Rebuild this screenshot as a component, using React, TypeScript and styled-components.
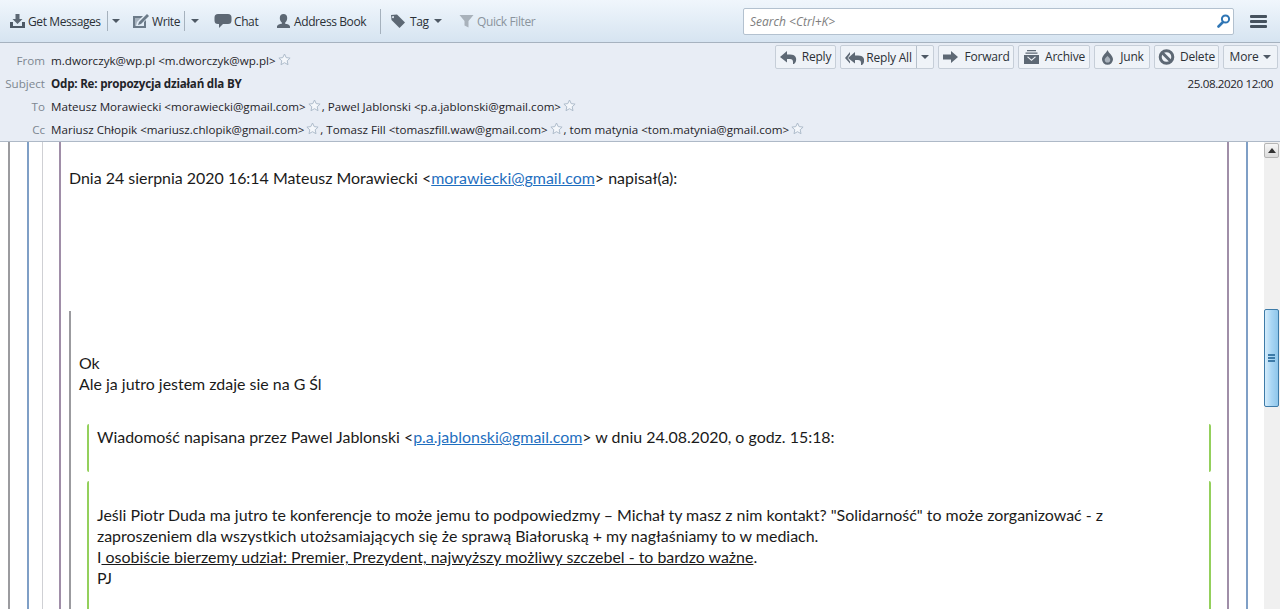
import * as React from 'react';
import styled, { createGlobalStyle } from 'styled-components';

const Global = createGlobalStyle`
  html, body { margin: 0; padding: 0; height: 100%; overflow: hidden; background: #fff; }
  body { font-family: "Open Sans", "Liberation Sans", sans-serif; color: #222; }
`;

const Icon = ({ w = 16, h = 16, children }: { w?: number; h?: number; children: React.ReactNode }) => (
  <svg width={w} height={h} viewBox={`0 0 ${w} ${h}`} fill="#5d6874" style={{ flex: 'none', display: 'block' }}>{children}</svg>
);

const Star = () => (
  <StarBox width="13" height="13" viewBox="0 0 13 13">
    <path d="M6.5 1l1.7 3.6 3.9.5-2.9 2.7.8 3.9-3.5-2-3.5 2 .8-3.9L.9 5.1l3.9-.5z" fill="#f4f7fb" stroke="#aebccb" strokeWidth="1" />
  </StarBox>
);

const ReplyArrow = ({ x = 0 }: { x?: number }) => (
  <path transform={`translate(${x} 0)`} d="M7 2L0 8l7 5.500V10h3c2 0 3 1 3 3v2h1c2-1.500 2.500-4 2-6-.5-2.500-3-3.500-6-3.500H7z" />
);

const GetMessagesIcon = () => (
  <Icon w={17} h={16}>
    <path d="M6.5 1h4v5h3l-5 5-5-5h3z" />
    <path d="M1 9h3v4h9V9h3v6H1z" fill="#4d5966" />
  </Icon>
);
const WriteIcon = () => (
  <Icon w={18} h={16}>
    <path d="M1 3h10l-2 2H3v8h9V9l2-2v8H1z" fill="#6b7a88" />
    <path d="M15 1l2 2-8 8-3 1 1-3z" fill="#6b7a88" />
    <path d="M3 5h6L5 9l-1 4H3z" fill="#a5b1bd" />
  </Icon>
);
const ChatIcon = () => (
  <Icon w={18} h={16}>
    <path d="M4 1h10a3.500 3.500 0 0 1 3.500 3.500v3A3.500 3.500 0 0 1 14 11H9l-4 4v-4H4A3.500 3.500 0 0 1 .5 7.500v-3A3.500 3.500 0 0 1 4 1z" />
  </Icon>
);
const PersonIcon = () => (
  <Icon w={16} h={16}>
    <path d="M7.500 1c2.300 0 3.700 1.600 3.700 4 0 2-.9 3.800-2 4.500v1.200c1.800.4 4.800 1 4.800 2.800V15H1v-1.500c0-1.800 3-2.400 4.800-2.800V9.500c-1.100-.7-2-2.500-2-4.500 0-2.400 1.400-4 3.700-4z" />
  </Icon>
);
const TagIcon = () => (
  <Icon w={18} h={16}>
    <path d="M1 2l6-.5 8 8-5.500 5.500-8-8zM4 4a1 1 0 1 0 0 .1z" fillRule="evenodd" />
  </Icon>
);
const FilterIcon = () => (
  <Icon w={16} h={16}>
    <path d="M.5 2h14L9.500 8v6.500l-4-2V8z" fill="#a9b2bb" />
  </Icon>
);
const ForwardIcon = () => (
  <Icon w={17} h={16}>
    <path d="M9 2l7 6-7 6v-3.500H1v-5h8z" />
  </Icon>
);
const ArchiveIcon = () => (
  <Icon w={17} h={16}>
    <path d="M4 1h9v1.200H4zM2.500 3.500h12v1.200h-12z" />
    <path d="M1 6h15v9H1zm3 2l4.500 4L13 8l-1-.5-3.500 3-3.500-3z" fillRule="evenodd" />
  </Icon>
);
const JunkIcon = () => (
  <Icon w={15} h={16}>
    <path d="M7.500 1C8.500 4 13 6.500 13 10.300a5.500 5.500 0 0 1-11 0C2 6.500 6.500 4 7.500 1z" />
    <path d="M7.500 7c.8 1.200 2.800 2.200 2.800 3.800a2.800 2.800 0 0 1-5.600 0C4.700 9.200 6.700 8.200 7.500 7z" fill="#aab3bd" />
  </Icon>
);
const DeleteIcon = () => (
  <Icon w={17} h={16}>
    <circle cx="8.500" cy="8" r="6.300" fill="none" stroke="#5d6874" strokeWidth="3" />
    <path d="M4.500 4l8 8" stroke="#5d6874" strokeWidth="3" />
  </Icon>
);

export default function App() {
  return (
    <Page>
      <Global />
      <Toolbar>
        <ToolItem $w={92}><GetMessagesIcon /><span>Get Messages</span></ToolItem>
        <Sep $h={20} $ml={6} />
        <Caret $ml={4} $mr={12} />
        <ToolItem $w={48}><WriteIcon /><span>Write</span></ToolItem>
        <Sep $h={20} $ml={4} />
        <Caret $ml={6} $mr={15} />
        <ToolItem $w={45}><ChatIcon /><span>Chat</span></ToolItem>
        <ToolItem $w={90} $ml={17}><PersonIcon /><span>Address Book</span></ToolItem>
        <Sep $h={25} $ml={14} />
        <ToolItem $w={39} $ml={9}><TagIcon /><span>Tag</span></ToolItem>
        <Caret $ml={5} $mr={17} />
        <ToolItem $w={78} $muted><FilterIcon /><span>Quick Filter</span></ToolItem>
        <Search>
          <SearchHint>Search &lt;Ctrl+K&gt;</SearchHint>
          <svg width="14" height="14" viewBox="0 0 14 14">
            <circle cx="8.500" cy="5" r="3.600" fill="none" stroke="#2f76b5" strokeWidth="2" />
            <path d="M6 8L1.500 12.500" stroke="#2f76b5" strokeWidth="2.600" strokeLinecap="round" />
          </svg>
        </Search>
        <Burger><i /><i /><i /></Burger>
      </Toolbar>

      <Header>
        <FromRow>
          <Label>From</Label>
          <Value>m.dworczyk@wp.pl &lt;m.dworczyk@wp.pl&gt;<Star /></Value>
          <Actions>
            <ActionButton $w={61}><Icon w={17} h={16}><ReplyArrow /></Icon>Reply</ActionButton>
            <SplitButton>
              <ActionButton as="div" $w={75} $flat $gap={2}>
                <Icon w={19} h={16}>
                  <path d="M5 2L0 8l5 5.500v-2L2.500 8 5 4.500z" />
                  <ReplyArrow x={3} />
                </Icon>
                Reply All
              </ActionButton>
              <SplitCaret><Caret /></SplitCaret>
            </SplitButton>
            <ActionButton $w={76}><ForwardIcon />Forward</ActionButton>
            <ActionButton $w={72}><ArchiveIcon />Archive</ActionButton>
            <ActionButton $w={56}><JunkIcon />Junk</ActionButton>
            <ActionButton $w={65}><DeleteIcon />Delete</ActionButton>
            <ActionButton $w={55}>More<Caret /></ActionButton>
          </Actions>
        </FromRow>
        <Row>
          <Label>Subject</Label>
          <Value $bold>Odp: Re: propozycja działań dla BY</Value>
          <DateText>25.08.2020 12:00</DateText>
        </Row>
        <Row>
          <Label>To</Label>
          <Value>
            Mateusz Morawiecki &lt;morawiecki@gmail.com&gt;<Star />, Pawel Jablonski &lt;p.a.jablonski@gmail.com&gt;<Star />
          </Value>
        </Row>
        <Row>
          <Label>Cc</Label>
          <Value>
            Mariusz Chłopik &lt;mariusz.chlopik@gmail.com&gt;<Star />, Tomasz Fill &lt;tomaszfill.waw@gmail.com&gt;<Star />, tom matynia &lt;tom.matynia@gmail.com&gt;<Star />
          </Value>
        </Row>
      </Header>

      <Main>
        <Message>
          <OuterQuote>
            <BlueQuote>
              <PaleQuote>
                <PurpleQuote>
                  <Intro>
                    Dnia 24 sierpnia 2020 16:14 Mateusz Morawiecki &lt;<Link>morawiecki@gmail.com</Link>&gt; napisał(a):
                  </Intro>
                  <InnerQuote>
                    <Reply>Ok<br />Ale ja jutro jestem zdaje sie na G Śl</Reply>
                    <GreenNote>
                      Wiadomość napisana przez Pawel Jablonski &lt;<Link>p.a.jablonski@gmail.com</Link>&gt; w dniu 24.08.2020, o godz. 15:18:
                    </GreenNote>
                    <GreenBody>
                      Jeśli Piotr Duda ma jutro te konferencje to może jemu to podpowiedzmy – Michał ty masz z nim kontakt? "Solidarność" to może zorganizować - z<br />
                      zaproszeniem dla wszystkich utożsamiających się że sprawą Białoruską + my nagłaśniamy to w mediach.<br />
                      I<Underlined> osobiście bierzemy udział: Premier, Prezydent, najwyższy możliwy szczebel - to bardzo ważne</Underlined>.<br />
                      PJ
                    </GreenBody>
                  </InnerQuote>
                </PurpleQuote>
              </PaleQuote>
            </BlueQuote>
          </OuterQuote>
        </Message>
        <Scrollbar>
          <ScrollUp>
            <svg width="8" height="5" viewBox="0 0 8 5"><path d="M4 0l4 5H0z" fill="#333" /></svg>
          </ScrollUp>
          <ScrollThumb><Grip><i /><i /><i /></Grip></ScrollThumb>
        </Scrollbar>
      </Main>
    </Page>
  );
}

const Page = styled.div`
  width: 1280px;
  height: 609px;
  display: flex;
  flex-direction: column;
  overflow: hidden;
`;

const Toolbar = styled.div`
  height: 42px;
  flex: none;
  box-sizing: content-box;
  display: flex;
  align-items: center;
  padding-left: 9px;
  background: linear-gradient(#f0f6fc, #d6e4f1);
  border-bottom: 1px solid #a6b2bf;
  font-size: 12px;
  letter-spacing: -0.4px;
`;

const ToolItem = styled.div<{ $w: number; $ml?: number; $muted?: boolean }>`
  width: ${({ $w }) => $w}px;
  margin-left: ${({ $ml }) => $ml || 0}px;
  display: flex;
  align-items: center;
  gap: 2px;
  white-space: nowrap;
  color: ${({ $muted }) => ($muted ? '#8b949d' : '#2b3036')};
  flex: none;
`;

const Sep = styled.div<{ $h: number; $ml: number }>`
  width: 1px;
  height: ${({ $h }) => $h}px;
  margin-left: ${({ $ml }) => $ml}px;
  background: #a5b1bd;
  flex: none;
`;

const Caret = styled.span<{ $ml?: number; $mr?: number }>`
  width: 0;
  height: 0;
  flex: none;
  margin-left: ${({ $ml }) => $ml || 0}px;
  margin-right: ${({ $mr }) => $mr || 0}px;
  border-left: 4px solid transparent;
  border-right: 4px solid transparent;
  border-top: 4px solid #4e5965;
`;

const Search = styled.div`
  width: 491px;
  height: 27px;
  box-sizing: border-box;
  margin-left: auto;
  display: flex;
  align-items: center;
  justify-content: space-between;
  padding: 0 2px 0 6px;
  background: #fff;
  border: 1px solid #b3c1cf;
  border-radius: 2px;
`;

const SearchHint = styled.span`
  font-style: italic;
  font-size: 12px;
  letter-spacing: 0;
  color: #7d7d7d;
`;

const Burger = styled.div`
  width: 17px;
  margin: 0 13px 0 16px;
  display: flex;
  flex-direction: column;
  gap: 2px;
  flex: none;

  i {
    display: block;
    height: 3px;
    background: #46525e;
    border-radius: 1px;
  }
`;

const Header = styled.div`
  flex: none;
  height: 98px;
  background: #e8edf5;
  border-bottom: 1px solid #aeb9c7;
  font-size: 11.62px;
`;

const Row = styled.div`
  height: 23px;
  display: flex;
  align-items: center;
  white-space: nowrap;
`;

const FromRow = styled(Row)`
  height: 28.500px;
  padding-top: 7px;
  box-sizing: border-box;
`;

const Label = styled.div`
  width: 45px;
  margin-right: 6px;
  flex: none;
  text-align: right;
  color: #7d8791;
`;

const Value = styled.div<{ $bold?: boolean }>`
  font-weight: ${({ $bold }) => ($bold ? 700 : 400)};
  letter-spacing: ${({ $bold }) => ($bold ? '-0.22px' : '0')};
  color: #1f2429;
  display: flex;
  align-items: center;
`;

const StarBox = styled.svg`
  margin: -2px 1px 0 2px;
  flex: none;
`;

const DateText = styled.div`
  margin-left: auto;
  margin-right: 7px;
  letter-spacing: -0.4px;
  color: #1f2429;
`;

const Actions = styled.div`
  margin: -8px 2px 0 auto;
  display: flex;
  gap: 4px;
`;

const ActionButton = styled.button<{ $w: number; $flat?: boolean; $gap?: number }>`
  width: ${({ $w }) => $w}px;
  height: 24px;
  box-sizing: border-box;
  padding: 0;
  display: flex;
  align-items: center;
  justify-content: center;
  gap: ${({ $gap }) => $gap ?? 5}px;
  font: inherit;
  font-size: 12px;
  letter-spacing: -0.2px;
  color: #2b3036;
  background: ${({ $flat }) => ($flat ? 'transparent' : '#eff3f8')};
  border: ${({ $flat }) => ($flat ? 'none' : '1px solid #c6ced8')};
  border-radius: 2px;
  flex: none;
`;

const SplitButton = styled.div`
  width: 94px;
  height: 24px;
  box-sizing: border-box;
  display: flex;
  background: #eff3f8;
  border: 1px solid #c6ced8;
  border-radius: 2px;
`;

const SplitCaret = styled.div`
  flex: 1;
  display: flex;
  align-items: center;
  justify-content: center;
  border-left: 1px solid #b5bfca;
`;

const Main = styled.div`
  flex: 1;
  min-height: 0;
  display: flex;
`;

const Message = styled.div`
  flex: 1;
  min-width: 0;
  overflow: hidden;
  padding-left: 8px;
  font-family: Lato, "Open Sans", sans-serif;
  font-size: 15.95px;
  line-height: 21px;
  color: #1a1a1a;
`;

const OuterQuote = styled.div`
  margin-right: -4px;
  padding: 0 20px 0 17px;
  border-left: 2px solid #9b9b9f;
`;

const BlueQuote = styled.div`
  padding: 0 17px 0 13px;
  border-left: 2px solid #7f9fc6;
  border-right: 2px solid #7f9fc6;
`;

const PaleQuote = styled.div`
  padding-left: 16px;
  border-left: 1px solid #cfd0d4;
`;

const PurpleQuote = styled.div`
  padding-left: 8px;
  border-left: 2px solid #a08ea8;
  border-right: 2px solid #a08ea8;
`;

const Intro = styled.div`
  padding-top: 25px;
`;

const InnerQuote = styled.div`
  margin-top: 123px;
  padding-top: 41px;
  border-left: 2px solid #9b9b9f;
`;

const Reply = styled.div`
  padding-left: 8px;
`;

const GreenNote = styled.div`
  margin: 30px 16px 0;
  padding: 2px 8px 25px;
  border-left: 2px solid #94d05c;
  border-right: 2px solid #94d05c;
  border-radius: 2px;
`;

const GreenBody = styled.div`
  margin: 9px 16px 0;
  padding: 23px 8px 40px;
  border-left: 2px solid #94d05c;
  border-right: 2px solid #94d05c;
  border-radius: 2px;
`;

const Link = styled.span`
  color: #1f6fc0;
  text-decoration: underline;
`;

const Underlined = styled.span`
  text-decoration: underline;
`;

const Scrollbar = styled.div`
  width: 16px;
  flex: none;
  background: #f0f0f0;
  padding-top: 1px;
`;

const ScrollUp = styled.div`
  width: 15px;
  height: 15px;
  box-sizing: border-box;
  display: flex;
  align-items: center;
  justify-content: center;
  background: linear-gradient(#f6f6f6, #dcdcdc);
  border: 1px solid #b5b5b5;
  border-radius: 2px;
`;

const ScrollThumb = styled.div`
  width: 15px;
  height: 98px;
  box-sizing: border-box;
  margin-top: 151px;
  display: flex;
  align-items: center;
  justify-content: center;
  background: linear-gradient(90deg, #d5ecfb, #a9d6f4 50%, #8fc6ea);
  border: 1px solid #3d7ba8;
  border-radius: 2px;
`;

const Grip = styled.div`
  width: 7px;
  display: flex;
  flex-direction: column;
  gap: 1px;

  i {
    display: block;
    height: 2px;
    background: #3d7ba8;
  }
`;
